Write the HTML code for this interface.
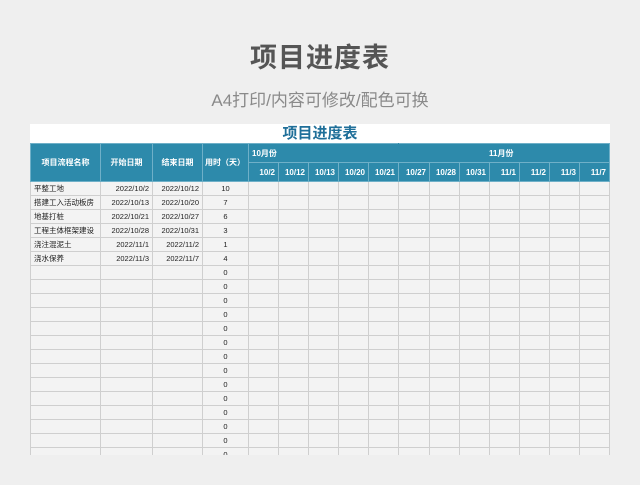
<!DOCTYPE html>
<html><head><meta charset="utf-8"><style>
body{margin:0;width:640px;height:485px;background:#efefef;font-family:"Liberation Sans","Noto Sans CJK SC",sans-serif;position:relative;overflow:hidden}
.t1{position:absolute;top:36px;left:0;width:640px;text-align:center;font-size:27px;font-weight:bold;color:#555;letter-spacing:1px}
.t2{position:absolute;top:86px;left:0;width:640px;text-align:center;font-size:17px;color:#8a8a8a}
.wrap{position:absolute;left:30px;top:124px;width:580px;height:331px;overflow:hidden}
.bar{height:19px;background:#fff;text-align:center;font-size:15px;font-weight:bold;color:#1f6f99;line-height:19px}
table{border-collapse:collapse;table-layout:fixed;font-size:7.5px;color:#222}
td{border:1px solid #cfcfcf;height:13px;padding:0 3px;background:#f3f3f3;white-space:nowrap;overflow:hidden}
th{background:#2d8aab;color:#fff;border:1px solid #6fb0c8;font-weight:bold;font-size:8px;padding:0 3px;white-space:nowrap}
.r{text-align:right}.c{text-align:center}
</style></head><body>
<div class="t1">项目进度表</div>
<div class="t2">A4打印/内容可修改/配色可换</div>
<div class="wrap">
<div class="bar">项目进度表</div>
<table>
<colgroup><col style="width:70px"><col style="width:52px"><col style="width:50px"><col style="width:46px">
<col style="width:30px"><col style="width:30px"><col style="width:30px"><col style="width:30px"><col style="width:30px"><col style="width:31px"><col style="width:30px"><col style="width:30px"><col style="width:30px"><col style="width:30px"><col style="width:30px"><col style="width:30px"></colgroup>
<tr style="height:19px"><th rowspan="2">项目流程名称</th><th rowspan="2">开始日期</th><th rowspan="2">结束日期</th><th rowspan="2" style="text-align:left;padding:0 2px">用时（天）</th><th colspan="5" style="text-align:left;border-right-color:#2d8aab">10月份</th><th colspan="7" style="text-align:left;padding-left:90px">11月份</th></tr>
<tr style="height:19px"><th class="r">10/2</th><th class="r">10/12</th><th class="r">10/13</th><th class="r">10/20</th><th class="r">10/21</th><th class="r">10/27</th><th class="r">10/28</th><th class="r">10/31</th><th class="r">11/1</th><th class="r">11/2</th><th class="r">11/3</th><th class="r">11/7</th></tr>
<tr><td>平整工地</td><td class="r">2022/10/2</td><td class="r">2022/10/12</td><td class="c">10</td><td></td><td></td><td></td><td></td><td></td><td></td><td></td><td></td><td></td><td></td><td></td><td></td></tr>
<tr><td>搭建工入活动板房</td><td class="r">2022/10/13</td><td class="r">2022/10/20</td><td class="c">7</td><td></td><td></td><td></td><td></td><td></td><td></td><td></td><td></td><td></td><td></td><td></td><td></td></tr>
<tr><td>地基打桩</td><td class="r">2022/10/21</td><td class="r">2022/10/27</td><td class="c">6</td><td></td><td></td><td></td><td></td><td></td><td></td><td></td><td></td><td></td><td></td><td></td><td></td></tr>
<tr><td>工程主体框架建设</td><td class="r">2022/10/28</td><td class="r">2022/10/31</td><td class="c">3</td><td></td><td></td><td></td><td></td><td></td><td></td><td></td><td></td><td></td><td></td><td></td><td></td></tr>
<tr><td>浇注混泥土</td><td class="r">2022/11/1</td><td class="r">2022/11/2</td><td class="c">1</td><td></td><td></td><td></td><td></td><td></td><td></td><td></td><td></td><td></td><td></td><td></td><td></td></tr>
<tr><td>浇水保养</td><td class="r">2022/11/3</td><td class="r">2022/11/7</td><td class="c">4</td><td></td><td></td><td></td><td></td><td></td><td></td><td></td><td></td><td></td><td></td><td></td><td></td></tr>
<tr><td></td><td></td><td></td><td class="c">0</td><td></td><td></td><td></td><td></td><td></td><td></td><td></td><td></td><td></td><td></td><td></td><td></td></tr>
<tr><td></td><td></td><td></td><td class="c">0</td><td></td><td></td><td></td><td></td><td></td><td></td><td></td><td></td><td></td><td></td><td></td><td></td></tr>
<tr><td></td><td></td><td></td><td class="c">0</td><td></td><td></td><td></td><td></td><td></td><td></td><td></td><td></td><td></td><td></td><td></td><td></td></tr>
<tr><td></td><td></td><td></td><td class="c">0</td><td></td><td></td><td></td><td></td><td></td><td></td><td></td><td></td><td></td><td></td><td></td><td></td></tr>
<tr><td></td><td></td><td></td><td class="c">0</td><td></td><td></td><td></td><td></td><td></td><td></td><td></td><td></td><td></td><td></td><td></td><td></td></tr>
<tr><td></td><td></td><td></td><td class="c">0</td><td></td><td></td><td></td><td></td><td></td><td></td><td></td><td></td><td></td><td></td><td></td><td></td></tr>
<tr><td></td><td></td><td></td><td class="c">0</td><td></td><td></td><td></td><td></td><td></td><td></td><td></td><td></td><td></td><td></td><td></td><td></td></tr>
<tr><td></td><td></td><td></td><td class="c">0</td><td></td><td></td><td></td><td></td><td></td><td></td><td></td><td></td><td></td><td></td><td></td><td></td></tr>
<tr><td></td><td></td><td></td><td class="c">0</td><td></td><td></td><td></td><td></td><td></td><td></td><td></td><td></td><td></td><td></td><td></td><td></td></tr>
<tr><td></td><td></td><td></td><td class="c">0</td><td></td><td></td><td></td><td></td><td></td><td></td><td></td><td></td><td></td><td></td><td></td><td></td></tr>
<tr><td></td><td></td><td></td><td class="c">0</td><td></td><td></td><td></td><td></td><td></td><td></td><td></td><td></td><td></td><td></td><td></td><td></td></tr>
<tr><td></td><td></td><td></td><td class="c">0</td><td></td><td></td><td></td><td></td><td></td><td></td><td></td><td></td><td></td><td></td><td></td><td></td></tr>
<tr><td></td><td></td><td></td><td class="c">0</td><td></td><td></td><td></td><td></td><td></td><td></td><td></td><td></td><td></td><td></td><td></td><td></td></tr>
<tr><td></td><td></td><td></td><td class="c">0</td><td></td><td></td><td></td><td></td><td></td><td></td><td></td><td></td><td></td><td></td><td></td><td></td></tr>
</table>
</div>
</body></html>
